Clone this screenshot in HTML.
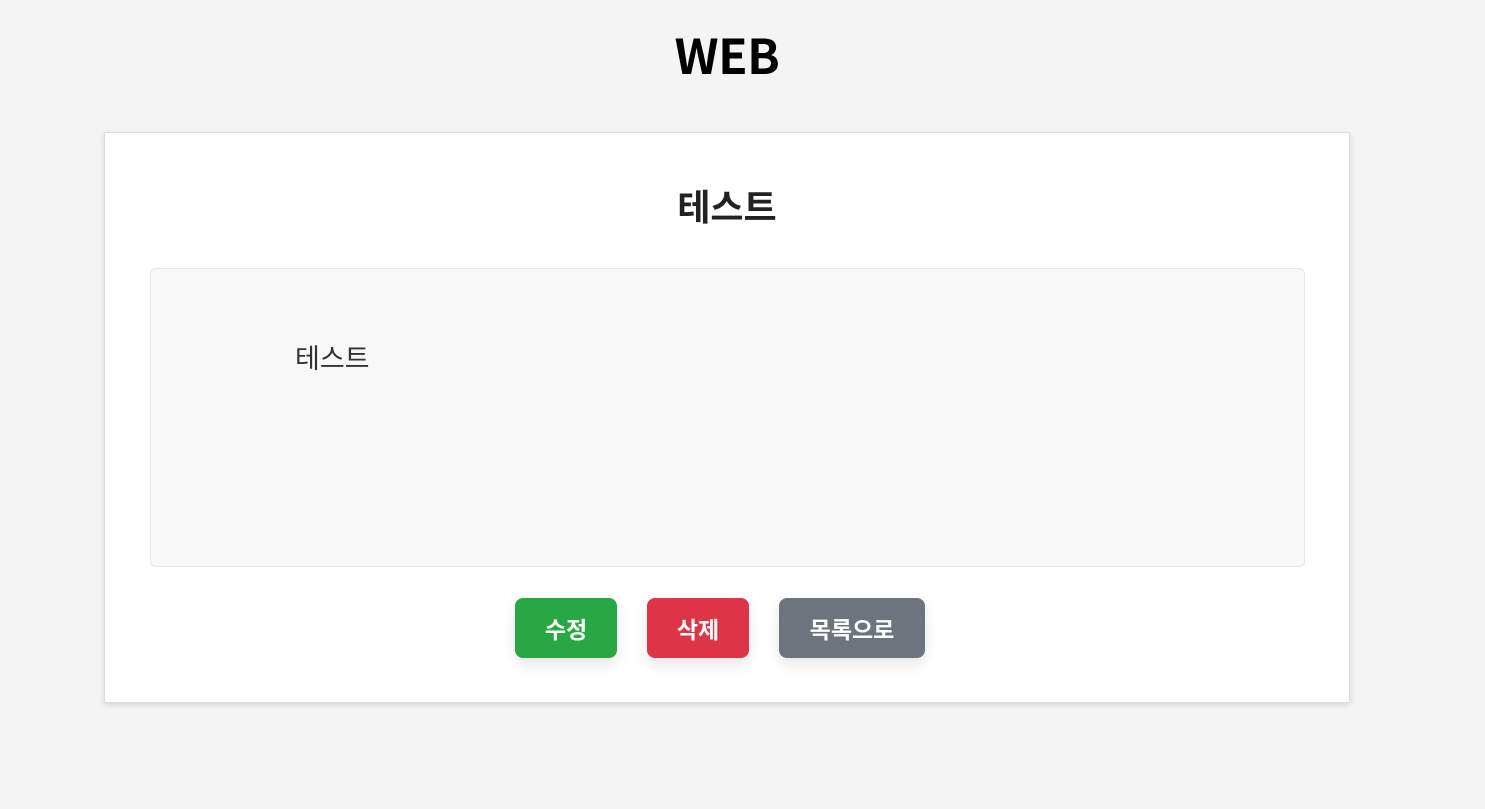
<!DOCTYPE html>
<html><head><meta charset="utf-8"><style>
body{margin:0;background:#f4f4f4;font-family:"Liberation Sans","Noto Sans CJK KR",sans-serif;width:1485px;height:809px;overflow:hidden;position:relative}
h1{position:absolute;top:21px;left:104px;width:1246px;margin:0;text-align:center;font:700 48px/64px "Noto Sans CJK KR",sans-serif;color:#000;letter-spacing:-0.5px}
.card{position:absolute;left:104px;top:132px;width:1244px;height:569px;background:#fff;border:1px solid #ddd;box-shadow:0 2px 6px rgba(0,0,0,.12)}
h2{position:absolute;top:179px;left:104px;width:1246px;margin:0;text-align:center;font:700 36px/52px "Noto Sans CJK KR",sans-serif;color:#222}
.box{position:absolute;left:150px;top:268px;width:1153px;height:297px;background:#f8f8f8;border:1px solid #e6e6e6;border-radius:6px}
.txt{position:absolute;left:295px;top:338px;font:400 27px/38px "Noto Sans CJK KR",sans-serif;color:#333}
.b{position:absolute;top:598px;height:60px;border-radius:8px;color:#fff;font:700 23px/60px "Noto Sans CJK KR",sans-serif;text-align:center;box-shadow:0 6px 14px rgba(0,0,0,.1)}
</style></head><body>
<h1>WEB</h1>
<div class="card"></div>
<h2>테스트</h2>
<div class="box"></div>
<div class="txt">테스트</div>
<div class="b" style="left:515px;width:102px;background:#28a745">수정</div>
<div class="b" style="left:647px;width:102px;background:#dc3545">삭제</div>
<div class="b" style="left:779px;width:146px;background:#6c757d">목록으로</div>
</body></html>
